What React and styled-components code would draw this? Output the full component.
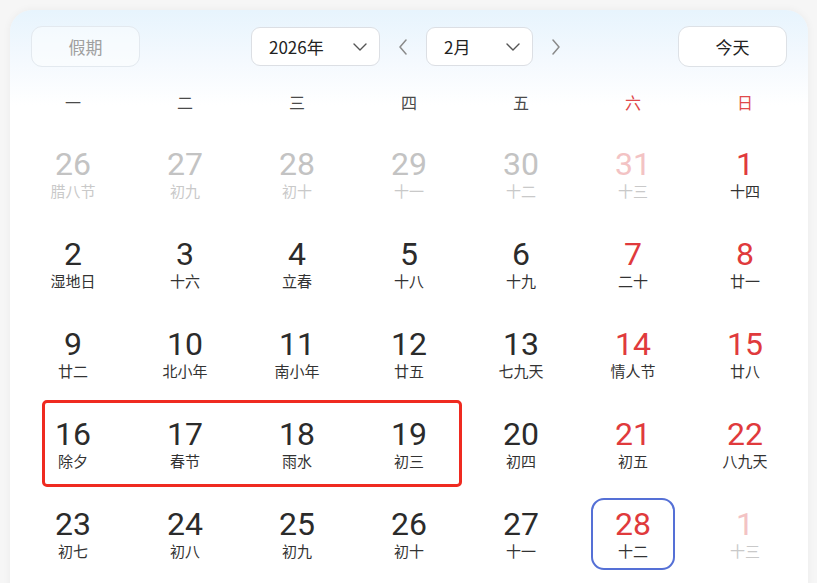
import React from "react";
import styled, { createGlobalStyle } from "styled-components";

const GlobalStyle = createGlobalStyle`
  html, body {
    margin: 0;
    padding: 0;
    background: #f6f6f6;
    overflow: hidden;
  }
  body {
    font-family: "Noto Sans CJK SC", "Noto Sans", sans-serif;
  }
`;

const Page = styled.div`
  padding: 10px 9px 0 10px;
  height: 583px;
  box-sizing: border-box;
  overflow: hidden;
`;

const Card = styled.div`
  position: relative;
  height: 620px;
  border-radius: 22px;
  background: linear-gradient(180deg, #e7f4fd 0px, #f4f9fe 50px, #ffffff 95px);
  box-shadow: 0 0 8px rgba(0, 0, 0, 0.05);
  padding: 16px 7px 0;
  box-sizing: border-box;
`;

const Header = styled.div`
  display: flex;
  align-items: center;
  justify-content: space-between;
  margin: 0 14px;
  height: 41px;
`;

const PillButton = styled.div`
  width: 109px;
  height: 41px;
  box-sizing: border-box;
  border-radius: 11px;
  border: 1px solid ${p => (p.$muted ? "#e3e9ef" : "#dde1e6")};
  background: ${p => (p.$muted ? "rgba(255,255,255,0.45)" : "#ffffff")};
  color: ${p => (p.$muted ? "#a0a0a0" : "#222222")};
  font-size: 17px;
  display: flex;
  align-items: center;
  justify-content: center;
`;

const Center = styled.div`
  display: flex;
  align-items: center;
  gap: 18px;
  margin-right: 6px;
`;

const Select = styled.div`
  width: ${p => p.$w}px;
  height: 39px;
  box-sizing: border-box;
  border-radius: 9px;
  border: 1px solid #dcdfe4;
  background: #ffffff;
  display: flex;
  align-items: center;
  justify-content: space-between;
  padding: 0 12px 0 17px;
  font-size: 17px;
  color: #222222;
`;

const Arrow = styled.svg`
  display: block;
  flex: none;
`;

const Chevron = () => (
  <Arrow width="14" height="8" viewBox="0 0 14 8">
    <path d="M1 1 L7 7 L13 1" fill="none" stroke="#555" strokeWidth="1.4" strokeLinecap="round" strokeLinejoin="round" />
  </Arrow>
);

const NavArrow = ({ dir }) => (
  <Arrow width="10" height="16" viewBox="0 0 10 16">
    <path
      d={dir === "left" ? "M8 1 L2 8 L8 15" : "M2 1 L8 8 L2 15"}
      fill="none"
      stroke="#8a8a8a"
      strokeWidth="1.5"
      strokeLinecap="round"
      strokeLinejoin="round"
    />
  </Arrow>
);

const WeekRow = styled.div`
  display: grid;
  grid-template-columns: repeat(7, 1fr);
  margin-top: 19px;
  height: 32px;
`;

const WeekDay = styled.div`
  display: flex;
  align-items: center;
  justify-content: center;
  font-size: 16px;
  color: ${p => (p.$weekend ? "#e0494b" : "#4a4a4a")};
`;

const Grid = styled.div`
  position: relative;
  display: grid;
  grid-template-columns: repeat(7, 1fr);
  grid-auto-rows: 90px;
  margin-top: 11px;
`;

const Cell = styled.div`
  display: flex;
  align-items: center;
  justify-content: center;
`;

const DayBox = styled.div`
  width: 84px;
  height: 72px;
  box-sizing: border-box;
  border-radius: 13px;
  border: 2px solid ${p => (p.$today ? "#5570d6" : "transparent")};
  display: flex;
  flex-direction: column;
  align-items: center;
  justify-content: center;
`;

const Num = styled.div`
  font-family: "Roboto", "Noto Sans", sans-serif;
  font-weight: 400;
  font-size: 32px;
  line-height: 32px;
  color: ${p => p.$color};
`;

const Lunar = styled.div`
  font-size: 15px;
  line-height: 20px;
  margin-top: 1px;
  color: ${p => p.$color};
`;

const Highlight = styled.div`
  position: absolute;
  left: 25px;
  width: 420px;
  height: 87px;
  box-sizing: border-box;
  border: 3px solid #ef2a20;
  border-radius: 5px;
  pointer-events: none;
`;

const weekdays = ["一", "二", "三", "四", "五", "六", "日"];

const days = [
  [26, "腊八节", 1], [27, "初九", 1], [28, "初十", 1], [29, "十一", 1], [30, "十二", 1], [31, "十三", 1], [1, "十四"],
  [2, "湿地日"], [3, "十六"], [4, "立春"], [5, "十八"], [6, "十九"], [7, "二十"], [8, "廿一"],
  [9, "廿二"], [10, "北小年"], [11, "南小年"], [12, "廿五"], [13, "七九天"], [14, "情人节"], [15, "廿八"],
  [16, "除夕"], [17, "春节"], [18, "雨水"], [19, "初三"], [20, "初四"], [21, "初五"], [22, "八九天"],
  [23, "初七"], [24, "初八"], [25, "初九"], [26, "初十"], [27, "十一"], [28, "十二", 0, 1], [1, "十三", 1]
];

const numColor = (other, weekend) => {
  if (other) return weekend ? "#f3c3c4" : "#c3c3c3";
  return weekend ? "#e03a3c" : "#2b2b2b";
};

export default function App() {
  return (
    <>
      <GlobalStyle />
      <Page>
        <Card>
          <Header>
            <PillButton $muted>假期</PillButton>
            <Center>
              <Select $w={129}>
                <span>2026年</span>
                <Chevron />
              </Select>
              <NavArrow dir="left" />
              <Select $w={107}>
                <span>2月</span>
                <Chevron />
              </Select>
              <NavArrow dir="right" />
            </Center>
            <PillButton>今天</PillButton>
          </Header>
          <WeekRow>
            {weekdays.map((w, i) => (
              <WeekDay key={w} $weekend={i >= 5}>{w}</WeekDay>
            ))}
          </WeekRow>
          <Grid>
            {days.map(([n, lunar, other, today], i) => {
              const weekend = i % 7 >= 5;
              return (
                <Cell key={i}>
                  <DayBox $today={today}>
                    <Num $color={numColor(other, weekend)}>{n}</Num>
                    <Lunar $color={other ? "#c9c9c9" : "#333333"}>{lunar}</Lunar>
                  </DayBox>
                </Cell>
              );
            })}
            <Highlight style={{ top: 271 }} />
          </Grid>
        </Card>
      </Page>
    </>
  );
}
